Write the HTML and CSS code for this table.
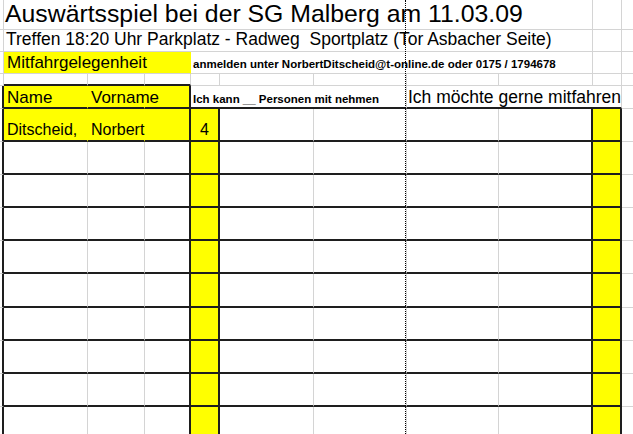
FILE: index.html
```html
<!DOCTYPE html>
<html lang="de">
<head>
<meta charset="utf-8">
<title>Auswärtsspiel bei der SG Malberg</title>
<link rel="stylesheet" href="styles.css">
</head>
<body>
<div class="sheet">
  <!-- row 1 -->
  <div class="c edge"></div>
  <div class="c span8 title"><span>Auswärtsspiel bei der SG Malberg am 11.03.09</span></div>
  <div class="c"></div>
  <div class="c"></div>
  <!-- row 2 -->
  <div class="c edge"></div>
  <div class="c span8 sub"><span>Treffen 18:20 Uhr Parkplatz - Radweg  Sportplatz (Tor Asbacher Seite)</span></div>
  <div class="c"></div>
  <div class="c"></div>
  <!-- row 3 -->
  <div class="c edge"></div>
  <div class="c span3 y big r3"><span>Mitfahrgelegenheit</span></div>
  <div class="c span5 small r3s"><span>anmelden unter NorbertDitscheid@t-online.de oder 0175 / 1794678</span></div>
  <div class="c"></div>
  <div class="c"></div>
  <!-- row 4 -->
  <div class="c edge"></div>
  <div class="c bk-b"></div>
  <div class="c bk-b"></div>
  <div class="c bk-b"></div>
  <div class="c"></div>
  <div class="c"></div>
  <div class="c"></div>
  <div class="c"></div>
  <div class="c"></div>
  <div class="c"></div>
  <div class="c"></div>
  <!-- row 5 header -->
  <div class="c edge bk-r"></div>
  <div class="c y nr bk-b big hd"><span>Name</span></div>
  <div class="c y nr bk-b big hd"><span>Vorname</span></div>
  <div class="c y bk-r bk-b"></div>
  <div class="c span3 bk-b small hds"><span>Ich kann __ Personen mit nehmen</span></div>
  <div class="c span3 bk-b big hd2"><span>Ich möchte gerne mitfahren</span></div>
  <div class="c"></div>
  <!-- data row 1 -->
  <div class="c edge bk-r"></div>
  <div class="c y nr bk-b data"><span>Ditscheid,</span></div>
  <div class="c y nr bk-b data"><span>Norbert</span></div>
  <div class="c y bk-b bk-r"></div>
  <div class="c y bk-b bk-r data num"><span>4</span></div>
  <div class="c bk-b"></div>
  <div class="c bk-b"></div>
  <div class="c bk-b"></div>
  <div class="c bk-b bk-r"></div>
  <div class="c y bk-b bk-r"></div>
  <div class="c"></div>
  <!-- data row 2 -->
  <div class="c edge bk-r"></div>
  <div class="c bk-b"></div>
  <div class="c bk-b"></div>
  <div class="c bk-b bk-r"></div>
  <div class="c y bk-b bk-r"></div>
  <div class="c bk-b"></div>
  <div class="c bk-b"></div>
  <div class="c bk-b"></div>
  <div class="c bk-b bk-r"></div>
  <div class="c y bk-b bk-r"></div>
  <div class="c"></div>
  <!-- data row 3 -->
  <div class="c edge bk-r"></div>
  <div class="c bk-b"></div>
  <div class="c bk-b"></div>
  <div class="c bk-b bk-r"></div>
  <div class="c y bk-b bk-r"></div>
  <div class="c bk-b"></div>
  <div class="c bk-b"></div>
  <div class="c bk-b"></div>
  <div class="c bk-b bk-r"></div>
  <div class="c y bk-b bk-r"></div>
  <div class="c"></div>
  <!-- data row 4 -->
  <div class="c edge bk-r"></div>
  <div class="c bk-b"></div>
  <div class="c bk-b"></div>
  <div class="c bk-b bk-r"></div>
  <div class="c y bk-b bk-r"></div>
  <div class="c bk-b"></div>
  <div class="c bk-b"></div>
  <div class="c bk-b"></div>
  <div class="c bk-b bk-r"></div>
  <div class="c y bk-b bk-r"></div>
  <div class="c"></div>
  <!-- data row 5 -->
  <div class="c edge bk-r"></div>
  <div class="c bk-b"></div>
  <div class="c bk-b"></div>
  <div class="c bk-b bk-r"></div>
  <div class="c y bk-b bk-r"></div>
  <div class="c bk-b"></div>
  <div class="c bk-b"></div>
  <div class="c bk-b"></div>
  <div class="c bk-b bk-r"></div>
  <div class="c y bk-b bk-r"></div>
  <div class="c"></div>
  <!-- data row 6 -->
  <div class="c edge bk-r"></div>
  <div class="c bk-b"></div>
  <div class="c bk-b"></div>
  <div class="c bk-b bk-r"></div>
  <div class="c y bk-b bk-r"></div>
  <div class="c bk-b"></div>
  <div class="c bk-b"></div>
  <div class="c bk-b"></div>
  <div class="c bk-b bk-r"></div>
  <div class="c y bk-b bk-r"></div>
  <div class="c"></div>
  <!-- data row 7 -->
  <div class="c edge bk-r"></div>
  <div class="c bk-b"></div>
  <div class="c bk-b"></div>
  <div class="c bk-b bk-r"></div>
  <div class="c y bk-b bk-r"></div>
  <div class="c bk-b"></div>
  <div class="c bk-b"></div>
  <div class="c bk-b"></div>
  <div class="c bk-b bk-r"></div>
  <div class="c y bk-b bk-r"></div>
  <div class="c"></div>
  <!-- data row 8 -->
  <div class="c edge bk-r"></div>
  <div class="c bk-b"></div>
  <div class="c bk-b"></div>
  <div class="c bk-b bk-r"></div>
  <div class="c y bk-b bk-r"></div>
  <div class="c bk-b"></div>
  <div class="c bk-b"></div>
  <div class="c bk-b"></div>
  <div class="c bk-b bk-r"></div>
  <div class="c y bk-b bk-r"></div>
  <div class="c"></div>
  <!-- data row 9 -->
  <div class="c edge bk-r"></div>
  <div class="c bk-b"></div>
  <div class="c bk-b"></div>
  <div class="c bk-b bk-r"></div>
  <div class="c y bk-b bk-r"></div>
  <div class="c bk-b"></div>
  <div class="c bk-b"></div>
  <div class="c bk-b"></div>
  <div class="c bk-b bk-r"></div>
  <div class="c y bk-b bk-r"></div>
  <div class="c"></div>
  <!-- data row 10 -->
  <div class="c edge bk-r"></div>
  <div class="c bk-b"></div>
  <div class="c bk-b"></div>
  <div class="c bk-b bk-r"></div>
  <div class="c y bk-b bk-r"></div>
  <div class="c bk-b"></div>
  <div class="c bk-b"></div>
  <div class="c bk-b"></div>
  <div class="c bk-b bk-r"></div>
  <div class="c y bk-b bk-r"></div>
  <div class="c"></div>

  <div class="pagebreak"></div>
</div>
</body>
</html>
```
FILE: styles.css
```css
html, body {
  margin: 0;
  padding: 0;
  background: #fff;
  overflow: hidden;
}
body {
  width: 633px;
  height: 434px;
  font-family: "Liberation Sans", Arial, sans-serif;
  color: #000;
}
.sheet {
  position: relative;
  display: grid;
  grid-template-columns: 4px 84px 57px 46px 29px 94px 93px 92px 94px 29px 40px;
  grid-template-rows: 30px 22px 22px 12px 23px repeat(10, 33.1px);
  width: 662px;
}
.c {
  box-sizing: border-box;
  border-right: 1px solid #d4d4d4;
  border-bottom: 1px solid #d4d4d4;
  display: flex;
  align-items: flex-end;
  white-space: pre;
  min-width: 0;
  overflow: visible;
  line-height: 1;
}
.c > span {
  position: relative;
  z-index: 1;
}
.span3 { grid-column: span 3; }
.span5 { grid-column: span 5; }
.span8 { grid-column: span 8; }
.y { background: #ffff00; }
.nr { border-right-color: transparent; }
.bk-r { border-right: 2px solid #1e1e1e; }
.bk-b { border-bottom: 2px solid #1e1e1e; }

.title {
  font-size: 24.8px;
  padding: 0 0 2px 1px;
}
.sub {
  font-size: 17.5px;
  padding: 0 0 3px 2px;
}
.big {
  font-size: 17px;
}
.r3 {
  padding: 0 0 2px 3px;
  border-right-color: transparent;
}
.small {
  font-size: 11.5px;
  font-weight: bold;
}
.r3s {
  padding: 0 0 3px 2px;
}
.hd {
  padding: 0 0 1px 3px;
}
.hds {
  padding: 0 0 2px 2px;
}
.hd2 {
  padding: 0 0 1px 1px;
  font-size: 17.5px;
}
.data {
  font-size: 16px;
  padding: 0 0 2px 3px;
}
.num {
  justify-content: center;
  padding-left: 0;
}
.pagebreak {
  position: absolute;
  z-index: 2;
  left: 405px;
  top: 0;
  bottom: 0;
  border-left: 1px dotted #000;
}
```
